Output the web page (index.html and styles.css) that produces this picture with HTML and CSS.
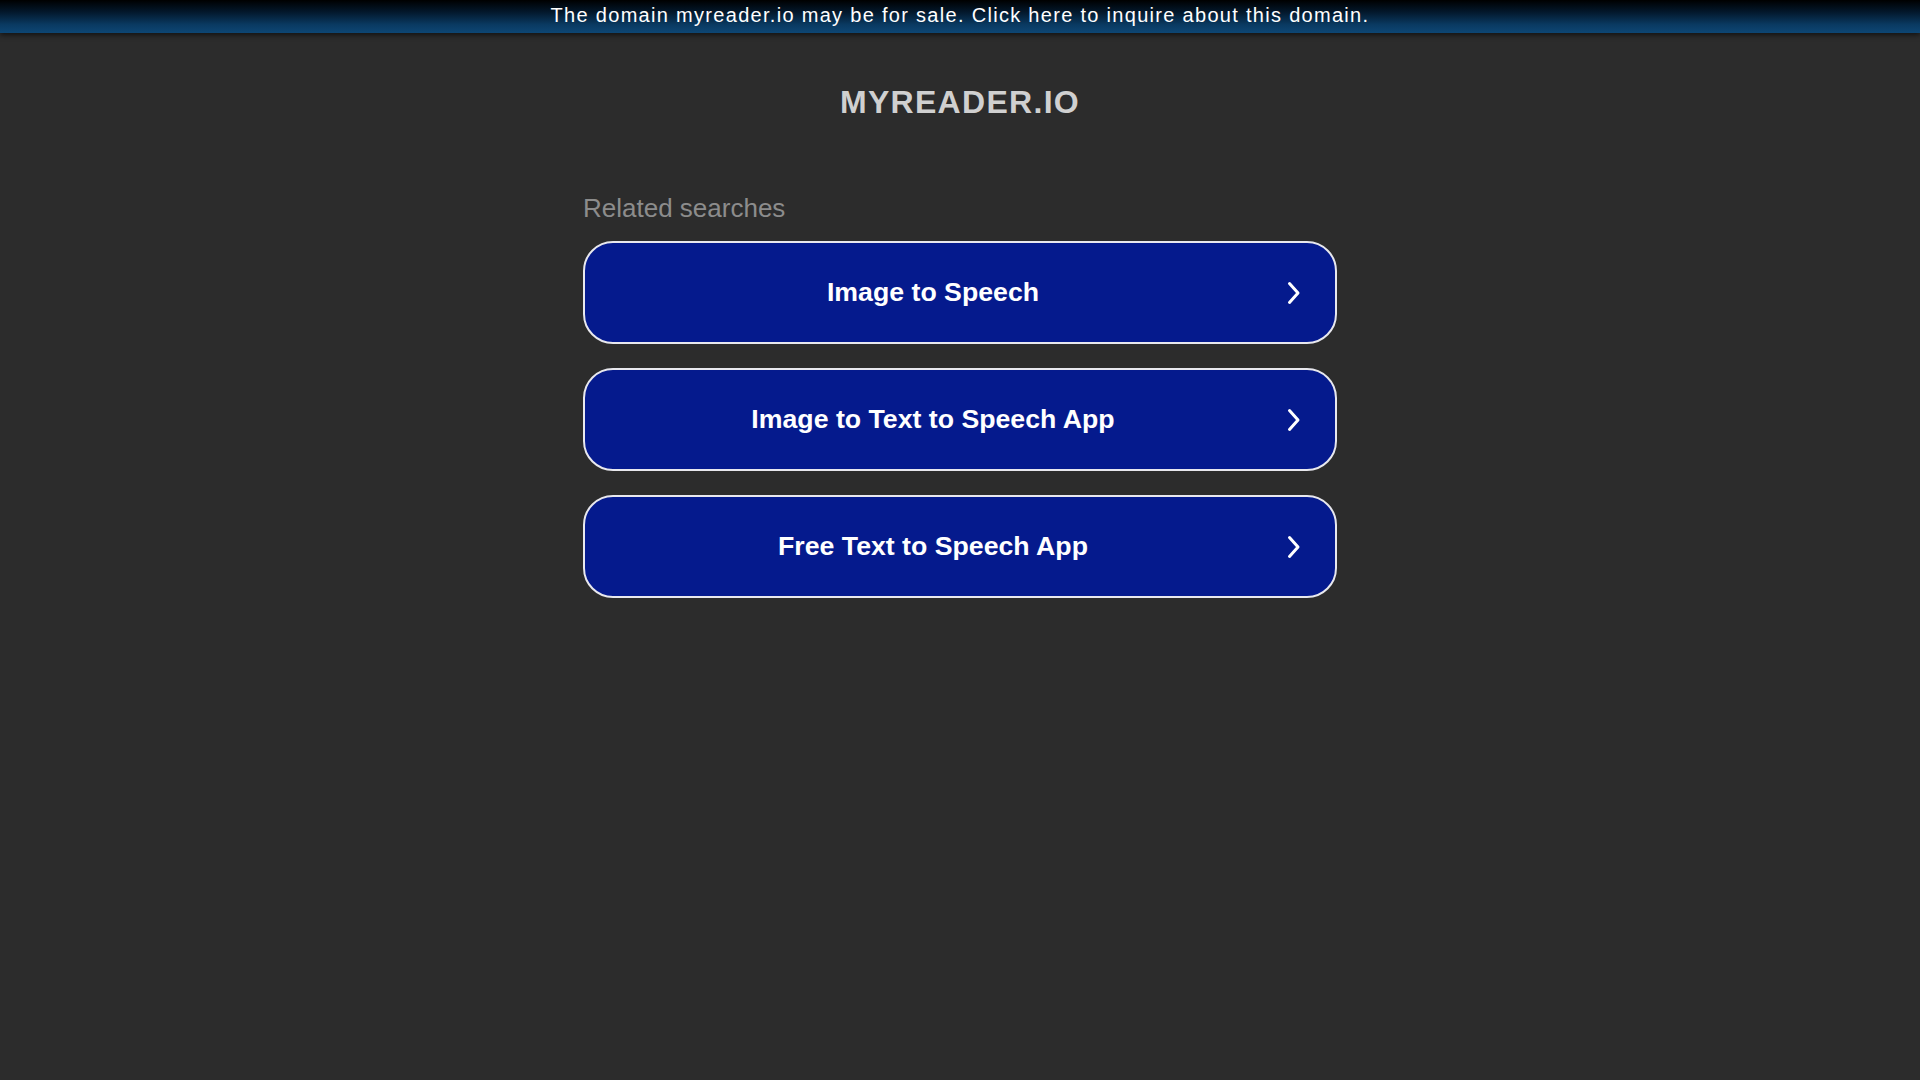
FILE: index.html
```html
<!DOCTYPE html>
<html lang="en">
<head>
<meta charset="utf-8">
<title>myreader.io</title>
<link rel="stylesheet" href="styles.css">
</head>
<body>
<div class="banner"><a class="banner-link" href="#">The domain myreader.io may be for sale. Click here to inquire about this domain.</a></div>
<main class="page">
  <h1 class="domain">MYREADER.IO</h1>
  <section class="related">
    <div class="related-title">Related searches</div>
    <div class="links">
      <a class="link-btn" href="#"><span class="link-text">Image to Speech</span><svg class="chev" width="14" height="24" viewBox="0 0 14 24"><path d="M2.5 2.5 L11 12 L2.5 21.5" fill="none" stroke="#fff" stroke-width="3" stroke-linecap="round" stroke-linejoin="round"/></svg></a>
      <a class="link-btn" href="#"><span class="link-text">Image to Text to Speech App</span><svg class="chev" width="14" height="24" viewBox="0 0 14 24"><path d="M2.5 2.5 L11 12 L2.5 21.5" fill="none" stroke="#fff" stroke-width="3" stroke-linecap="round" stroke-linejoin="round"/></svg></a>
      <a class="link-btn" href="#"><span class="link-text">Free Text to Speech App</span><svg class="chev" width="14" height="24" viewBox="0 0 14 24"><path d="M2.5 2.5 L11 12 L2.5 21.5" fill="none" stroke="#fff" stroke-width="3" stroke-linecap="round" stroke-linejoin="round"/></svg></a>
    </div>
  </section>
</main>
</body>
</html>
```
FILE: styles.css
```css
html, body {
  margin: 0;
  padding: 0;
}
body {
  background: #2c2c2c;
  font-family: "Liberation Sans", Arial, sans-serif;
  min-height: 100vh;
}
.banner {
  height: 33px;
  background: linear-gradient(to bottom, #000 0%, #03172a 35%, #0a3a62 75%, #0d4674 100%);
  box-shadow: 0 2px 5px rgba(0, 0, 0, 0.6);
  text-align: center;
  position: relative;
}
.banner-link {
  display: block;
  color: #fff;
  text-decoration: none;
  font-size: 20px;
  letter-spacing: 1.3px;
  line-height: 30px;
}
.page {
  display: flex;
  flex-direction: column;
  align-items: center;
}
.domain {
  margin: 49px 0 0;
  font-size: 32px;
  line-height: 40px;
  font-weight: bold;
  letter-spacing: 1.3px;
  color: #d0d0d0;
}
.related {
  width: 754px;
  margin-top: 71px;
}
.related-title {
  color: #8c8c8c;
  font-size: 26px;
  line-height: 30px;
  margin-bottom: 18px;
}
.links {
  display: flex;
  flex-direction: column;
  gap: 24px;
}
.link-btn {
  box-sizing: border-box;
  height: 103px;
  display: flex;
  align-items: center;
  padding: 0 34px 0 22px;
  background: #051a8d;
  border: 2px solid #e8e8ee;
  border-radius: 30px;
  color: #fff;
  text-decoration: none;
}
.link-text {
  flex: 1;
  text-align: center;
  font-size: 26.7px;
  font-weight: bold;
}
.chev {
  margin-left: 28px;
  flex: none;
}
```
